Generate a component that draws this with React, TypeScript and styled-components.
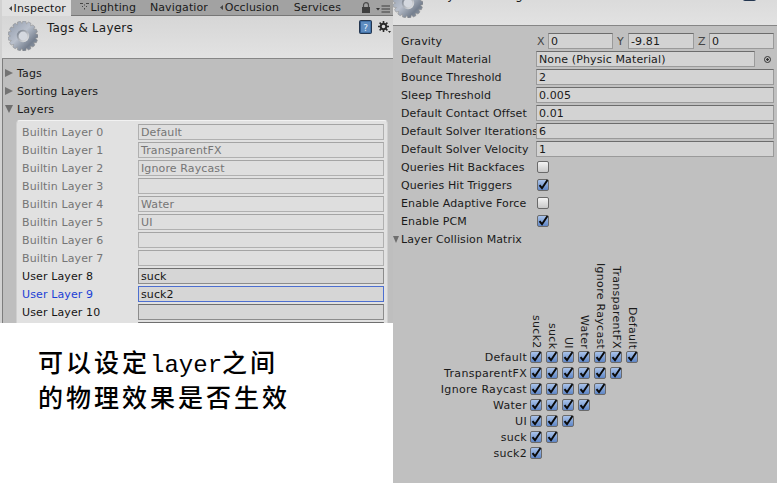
import * as React from 'react';
import styled, { createGlobalStyle } from 'styled-components';

const GlobalStyle = createGlobalStyle`
  html, body {
    margin: 0;
    padding: 0;
    width: 777px;
    height: 483px;
    overflow: hidden;
    background: #fff;
  }
  * { box-sizing: border-box; }
`;

const Page = styled.div`
  position: relative;
  display: flex;
  width: 777px;
  height: 483px;
  overflow: hidden;
  font-family: 'DejaVu Sans', sans-serif;
  font-size: 11px;
  letter-spacing: 0.12px;
  color: #1a1a1a;
`;

const Column = styled.div<{ $w: number }>`
  flex: none;
  width: ${p => p.$w}px;
  height: 483px;
  overflow: hidden;
  background: #c0c0c0;
`;

const LeftColumn = styled(Column)`
  background: #bebebe;
  border-left: 2px solid #d2d2d2;
  box-shadow: inset 1px 0 0 #7d7d7d;
`;

/* tabs */
const TabBar = styled.div`
  display: flex;
  height: 16px;
  background: #a2a2a2;
  border-bottom: 1px solid #777;
  align-items: stretch;
`;

const Tab = styled.div<{ $w: number; $active?: boolean }>`
  flex: none;
  display: flex;
  align-items: center;
  justify-content: flex-end;
  width: ${p => p.$w}px;
  height: ${p => (p.$active ? 16 : 15)}px;
  padding-right: ${p => (p.$active ? 5 : 0)}px;
  background: ${p => (p.$active ? '#e0e0e0' : 'transparent')};
  gap: 2px;
  white-space: nowrap;
  overflow: hidden;
`;

const TabEnd = styled.div`
  flex: 1;
  display: flex;
  align-items: center;
  justify-content: flex-end;
  gap: 5px;
  padding-right: 3px;
`;

/* inspector header */
const Header = styled.div<{ $cropped?: boolean }>`
  display: flex;
  height: 43px;
  margin-top: ${p => (p.$cropped ? -17 : 0)}px;
  padding: ${p => (p.$cropped ? '5px 0 0 0' : '5px 0 0 6px')};
  background: linear-gradient(#d6d6d6, #e2e2e2);
  border-bottom: 1px solid #868686;
`;

const HeaderTitle = styled.div`
  flex: 1;
  margin: 0 0 0 9px;
  font-size: 12px;
  line-height: 14px;
  letter-spacing: 0.2px;
`;

const HeaderTools = styled.div`
  display: flex;
  gap: 6px;
  padding-right: 2px;
  margin-top: -1px;
`;

/* left side */
const LeftBody = styled.div`
  padding: 5px 0 0 3px;
`;

const Foldout = styled.div`
  display: flex;
  align-items: center;
  height: 18px;
  gap: 4px;
`;

const Arrow = styled.span<{ $open?: boolean }>`
  flex: none;
  width: 0;
  height: 0;
  ${p =>
    p.$open
      ? `border-left: 4px solid transparent; border-right: 4px solid transparent; border-top: 8px solid #6e6e6e;`
      : `border-top: 4px solid transparent; border-bottom: 4px solid transparent; border-left: 8px solid #737373;`}
`;

const SmallArrow = styled.span`
  flex: none;
  width: 0;
  height: 0;
  border-left: 3px solid transparent;
  border-right: 3px solid transparent;
  border-top: 7px solid #6e6e6e;
`;

const LayerBox = styled.div`
  width: 372px;
  margin: 2px 0 0 11px;
  padding: 3px 3px 4px 5px;
  background: #e1e1e1;
  border-radius: 4px 4px 0 0;
  border: 1px solid #cfcfcf;
  border-top-color: #f2f2f2;
`;

const LayerRow = styled.div<{ $tone: 'muted' | 'user' | 'focus' }>`
  display: flex;
  align-items: center;
  height: 18px;
  padding-bottom: 2px;
  color: ${p => (p.$tone === 'muted' ? '#757575' : p.$tone === 'focus' ? '#1b3fd6' : '#151515')};
`;

const LayerName = styled.div`
  flex: none;
  width: 116px;
`;

const LayerField = styled.div<{ $tone: 'muted' | 'user' | 'focus' }>`
  width: 246px;
  height: 16px;
  line-height: 15px;
  padding-left: 2px;
  background: ${p => (p.$tone === 'muted' ? '#dedede' : '#d6d6d6')};
  border: 1px solid ${p => (p.$tone === 'muted' ? '#b0b0b0' : p.$tone === 'focus' ? '#4d6fd0' : '#8c8c8c')};
  border-top-color: ${p => (p.$tone === 'muted' ? '#a4a4a4' : p.$tone === 'focus' ? '#4d6fd0' : '#6f6f6f')};
  color: ${p => (p.$tone === 'muted' ? '#757575' : '#151515')};
`;

/* right side */
const RightBody = styled.div`
  padding-top: 7px;
`;

const PropRow = styled.div`
  display: flex;
  align-items: center;
  height: 18px;
  padding: 0 3px 2px 8px;
`;

const PropLabel = styled.div`
  flex: none;
  width: 135px;
  white-space: nowrap;
  overflow: hidden;
`;

const Field = styled.div<{ $w?: number }>`
  flex: ${p => (p.$w ? 'none' : '1')};
  width: ${p => (p.$w ? `${p.$w}px` : 'auto')};
  height: 16px;
  line-height: 15px;
  padding-left: 2px;
  background: #d3d3d3;
  border: 1px solid #9a9a9a;
  border-top-color: #6c6c6c;
`;

const Axis = styled.span<{ $w: number; $pad?: number }>`
  flex: none;
  width: ${p => p.$w}px;
  padding-left: ${p => p.$pad ?? 1}px;
  color: #444;
`;

const PickerDot = styled.span`
  flex: none;
  width: 7px;
  height: 7px;
  margin: 0 3px 0 9px;
  border: 1px solid #333;
  border-radius: 50%;
  background: radial-gradient(circle, #333 0 1px, transparent 1.5px);
`;

const MatrixTitle = styled(Foldout)`
  gap: 2px;
  padding-bottom: 2px;
`;

const Matrix = styled.div`
  margin-top: 15px;
  letter-spacing: 0.3px;
`;

const MatrixHead = styled.div`
  display: flex;
  height: 85px;
  padding-left: 135px;
`;

const VerticalLabel = styled.div`
  flex: none;
  width: 16px;
  height: 85px;
  display: flex;
  justify-content: flex-end;
  align-items: center;
  writing-mode: vertical-rl;
  white-space: nowrap;
  line-height: 16px;
`;

const MatrixRow = styled.div`
  display: flex;
  align-items: center;
  height: 16px;
`;

const MatrixLabel = styled.div`
  flex: none;
  width: 134px;
  text-align: right;
  white-space: nowrap;
`;

const MatrixCell = styled.div`
  flex: none;
  width: 16px;
  display: flex;
  justify-content: center;
  padding-left: 1px;
`;

const Box = styled.span<{ $checked?: boolean }>`
  flex: none;
  display: block;
  width: 12px;
  height: 12px;
  border: 1px solid #6a6a6a;
  border-radius: 2px;
  background: ${p =>
    p.$checked ? 'linear-gradient(#a9c3ea, #5f86c6)' : 'linear-gradient(#f4f4f4, #c9c9c9)'};
  overflow: visible;
`;

const CheckSvg = styled.svg`
  display: block;
  overflow: visible;
`;

const BoxSlot = styled.div`
  flex: none;
  padding-left: 1px;
`;

/* annotation pasted over the screenshot */
const Note = styled.div`
  position: absolute;
  left: 0;
  top: 323px;
  width: 393px;
  height: 160px;
  padding: 21px 0 0 38px;
  background: #fff;
  color: #000;
  font-family: 'Noto Sans CJK SC', sans-serif;
  font-size: 25px;
  font-weight: 500;
  line-height: 35px;
  letter-spacing: 3px;
  white-space: nowrap;
`;

const NoteLatin = styled.span`
  font-family: 'Liberation Mono', monospace;
  font-size: 24px;
  line-height: 0;
  letter-spacing: 0;
`;

function gearPath(teeth: number, ro: number, ri: number) {
  const pts: string[] = [];
  const step = (Math.PI * 2) / teeth;
  for (let i = 0; i < teeth; i++) {
    const a = i * step;
    [
      [ri, -0.5],
      [ro, -0.26],
      [ro, 0.26],
      [ri, 0.5],
    ].forEach(([r, k]) => {
      const t = a + k * step;
      pts.push(`${(15 + r * Math.cos(t)).toFixed(2)} ${(15 + r * Math.sin(t)).toFixed(2)}`);
    });
  }
  return `M${pts.join('L')}Z`;
}

const BigGear = ({ id }: { id: string }) => (
  <svg width="30" height="30" viewBox="0 0 30 30" style={{ flex: 'none' }}>
    <defs>
      <linearGradient id={id} x1="0" y1="0" x2="1" y2="1">
        <stop offset="0" stopColor="#8d97a8" />
        <stop offset="0.45" stopColor="#b9c0cc" />
        <stop offset="0.75" stopColor="#76808f" />
        <stop offset="1" stopColor="#9aa2ae" />
      </linearGradient>
      <linearGradient id={`${id}h`} x1="0" y1="0" x2="1" y2="1">
        <stop offset="0" stopColor="#6d7684" />
        <stop offset="1" stopColor="#f0f0f0" />
      </linearGradient>
    </defs>
    <path d={gearPath(17, 15, 12.6)} fill={`url(#${id})`} stroke="#8b8b8b" strokeWidth="0.5" />
    <circle cx="15" cy="15" r="6.2" fill={`url(#${id}h)`} />
    <circle cx="15" cy="15" r="4.4" fill="#d4d8df" />
  </svg>
);

const HelpBook = () => (
  <svg width="13" height="14" viewBox="0 0 13 14" style={{ flex: 'none' }}>
    <rect x="0.5" y="0.5" width="12" height="13" rx="1" fill="#2d5a91" stroke="#24364f" />
    <rect x="2" y="1.5" width="9.5" height="11" fill="#5d8bbf" />
    <text x="6.7" y="10.6" fontSize="9" fontFamily="DejaVu Sans" fill="#e8f0fa" textAnchor="middle">?</text>
  </svg>
);

const SmallGear = () => (
  <svg width="13" height="13" viewBox="0 0 13 13" style={{ flex: 'none', marginTop: 1 }}>
    <g fill="none" stroke="#2b2b2b">
      <circle cx="5.5" cy="5.5" r="2.8" strokeWidth="2" />
      <path d="M5.5 0v2M5.5 9v2M0 5.5h2M9 5.5h2M1.6 1.6l1.4 1.4M8 8l1.4 1.4M1.6 9.4L3 8M8 3l1.4-1.4" strokeWidth="1.6" />
    </g>
    <path d="M10 10h3l-1.5 2z" fill="#2b2b2b" />
  </svg>
);

const Lock = () => (
  <svg width="10" height="11" viewBox="0 0 10 11" style={{ flex: 'none' }}>
    <path d="M2.5 5V3.2a2.5 2.5 0 0 1 5 0V5" fill="none" stroke="#4c4c4c" strokeWidth="1.2" />
    <rect x="1" y="5" width="8" height="6" fill="#3f3f3f" />
  </svg>
);

const PaneMenu = () => (
  <svg width="14" height="8" viewBox="0 0 14 8" style={{ flex: 'none', marginTop: 2 }}>
    <path d="M0 3h4L2 5.5z" fill="#333" />
    <path d="M5.5 1H14M5.5 4H14M5.5 7H14" stroke="#3c3c3c" strokeWidth="1.2" />
  </svg>
);

const TabDot = () => (
  <svg width="3" height="5" viewBox="0 0 3 5" style={{ flex: 'none' }}>
    <path d="M3 0v5L0 2.5z" fill="#444" />
  </svg>
);

const LightingMark = () => (
  <svg width="9" height="7" viewBox="0 0 9 7" style={{ flex: 'none', marginBottom: 2 }}>
    <path d="M0 .5h3M6 .5h3M4.5 1.5v1M2 3.5h1M6 3.5h1M4.5 5v1.5" stroke="#444" />
  </svg>
);

const CheckBox = ({ checked }: { checked?: boolean }) => (
  <Box $checked={checked}>
    {checked && (
      <CheckSvg width="10" height="10" viewBox="0 0 10 10">
        <path d="M1.5 5.2L4 8.2 9.5 0" fill="none" stroke="#0a0a0a" strokeWidth="2" />
      </CheckSvg>
    )}
  </Box>
);

type Tone = 'muted' | 'user' | 'focus';

const layerRows: { name: string; value: string; tone: Tone }[] = [
  { name: 'Builtin Layer 0', value: 'Default', tone: 'muted' },
  { name: 'Builtin Layer 1', value: 'TransparentFX', tone: 'muted' },
  { name: 'Builtin Layer 2', value: 'Ignore Raycast', tone: 'muted' },
  { name: 'Builtin Layer 3', value: '', tone: 'muted' },
  { name: 'Builtin Layer 4', value: 'Water', tone: 'muted' },
  { name: 'Builtin Layer 5', value: 'UI', tone: 'muted' },
  { name: 'Builtin Layer 6', value: '', tone: 'muted' },
  { name: 'Builtin Layer 7', value: '', tone: 'muted' },
  { name: 'User Layer 8', value: 'suck', tone: 'user' },
  { name: 'User Layer 9', value: 'suck2', tone: 'focus' },
  { name: 'User Layer 10', value: '', tone: 'user' },
  { name: 'User Layer 11', value: '', tone: 'user' },
];

const valueRows = [
  ['Bounce Threshold', '2'],
  ['Sleep Threshold', '0.005'],
  ['Default Contact Offset', '0.01'],
  ['Default Solver Iterations', '6'],
  ['Default Solver Velocity', '1'],
];

const toggleRows: [string, boolean][] = [
  ['Queries Hit Backfaces', false],
  ['Queries Hit Triggers', true],
  ['Enable Adaptive Force', false],
  ['Enable PCM', true],
];

const matrixLayers = ['Default', 'TransparentFX', 'Ignore Raycast', 'Water', 'UI', 'suck', 'suck2'];

export default function App() {
  return (
    <Page>
      <GlobalStyle />
      <LeftColumn $w={393}>
        <TabBar>
          <Tab $w={69} $active>
            <TabDot />
            <span>Inspector</span>
          </Tab>
          <Tab $w={65}>
            <LightingMark />
            <span>Lighting</span>
          </Tab>
          <Tab $w={72}>
            <span>Navigatior</span>
          </Tab>
          <Tab $w={71}>
            <TabDot />
            <span>Occlusion</span>
          </Tab>
          <Tab $w={62}>
            <span>Services</span>
          </Tab>
          <TabEnd>
            <Lock />
            <PaneMenu />
          </TabEnd>
        </TabBar>
        <Header>
          <BigGear id="gearLeft" />
          <HeaderTitle>Tags &amp; Layers</HeaderTitle>
          <HeaderTools>
            <HelpBook />
            <SmallGear />
          </HeaderTools>
        </Header>
        <LeftBody>
          <Foldout>
            <Arrow />
            <span>Tags</span>
          </Foldout>
          <Foldout>
            <Arrow />
            <span>Sorting Layers</span>
          </Foldout>
          <Foldout>
            <Arrow $open />
            <span>Layers</span>
          </Foldout>
          <LayerBox>
            {layerRows.map(row => (
              <LayerRow key={row.name} $tone={row.tone}>
                <LayerName>{row.name}</LayerName>
                <LayerField $tone={row.tone}>{row.value}</LayerField>
              </LayerRow>
            ))}
          </LayerBox>
        </LeftBody>
      </LeftColumn>

      <Column $w={384}>
        <Header $cropped>
          <BigGear id="gearRight" />
          <HeaderTitle>Physics Manager</HeaderTitle>
          <HeaderTools>
            <HelpBook />
            <SmallGear />
          </HeaderTools>
        </Header>
        <RightBody>
          <PropRow>
            <PropLabel>Gravity</PropLabel>
            <Axis $w={12}>X</Axis>
            <Field $w={65}>0</Field>
            <Axis $w={15} $pad={4}>Y</Axis>
            <Field $w={66}>-9.81</Field>
            <Axis $w={15} $pad={4}>Z</Axis>
            <Field>0</Field>
          </PropRow>
          <PropRow>
            <PropLabel>Default Material</PropLabel>
            <Field>None (Physic Material)</Field>
            <PickerDot />
          </PropRow>
          {valueRows.map(([label, value]) => (
            <PropRow key={label}>
              <PropLabel>{label}</PropLabel>
              <Field>{value}</Field>
            </PropRow>
          ))}
          {toggleRows.map(([label, checked]) => (
            <PropRow key={label}>
              <PropLabel>{label}</PropLabel>
              <BoxSlot>
                <CheckBox checked={checked} />
              </BoxSlot>
            </PropRow>
          ))}
          <MatrixTitle>
            <SmallArrow />
            <span>Layer Collision Matrix</span>
          </MatrixTitle>
          <Matrix>
            <MatrixHead>
              {[...matrixLayers].reverse().map(name => (
                <VerticalLabel key={name}>{name}</VerticalLabel>
              ))}
            </MatrixHead>
            {matrixLayers.map((name, i) => (
              <MatrixRow key={name}>
                <MatrixLabel>{name}</MatrixLabel>
                {matrixLayers.slice(i).map(other => (
                  <MatrixCell key={other}>
                    <CheckBox checked />
                  </MatrixCell>
                ))}
              </MatrixRow>
            ))}
          </Matrix>
        </RightBody>
      </Column>

      <Note>
        <div>
          可以设定<NoteLatin>layer</NoteLatin>之间
        </div>
        <div>的物理效果是否生效</div>
      </Note>
    </Page>
  );
}
